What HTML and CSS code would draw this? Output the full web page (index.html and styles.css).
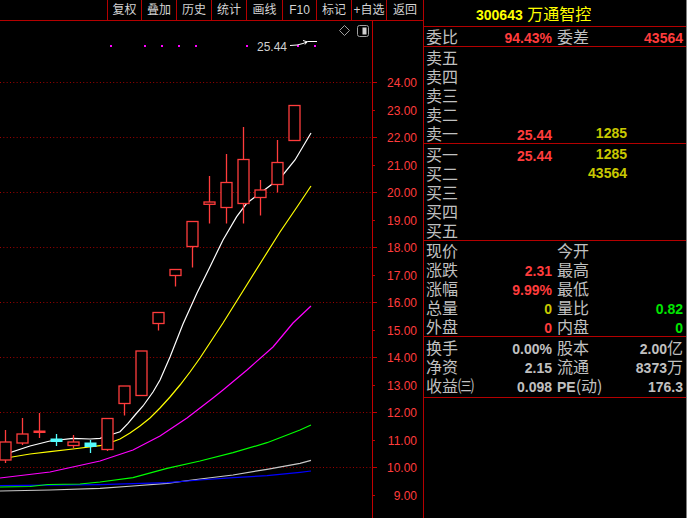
FILE: index.html
```html
<!DOCTYPE html>
<html lang="zh">
<head>
<meta charset="utf-8">
<title>300643 万通智控</title>
<link rel="stylesheet" href="styles.css">
</head>
<body>
<div class="app">
  <div class="left">
    <div class="toolbar">
      <div class="tb-space"></div>
      <div class="tb-btn w34">复权</div>
      <div class="tb-btn w35">叠加</div>
      <div class="tb-btn w35">历史</div>
      <div class="tb-btn w35">统计</div>
      <div class="tb-btn w36">画线</div>
      <div class="tb-btn w34">F10</div>
      <div class="tb-btn w35">标记</div>
      <div class="tb-btn w35">+自选</div>
      <div class="tb-btn w37">返回</div>
    </div>
    <div class="chart">
      <svg class="chart-svg" width="423" height="497" viewBox="0 21 423 497" xmlns="http://www.w3.org/2000/svg">
        <!-- grid -->
        <g class="grid">
          <line x1="0" y1="82.5" x2="372" y2="82.5"/>
          <line x1="0" y1="137.5" x2="372" y2="137.5"/>
          <line x1="0" y1="192.5" x2="372" y2="192.5"/>
          <line x1="0" y1="247.5" x2="372" y2="247.5"/>
          <line x1="0" y1="302.5" x2="372" y2="302.5"/>
          <line x1="0" y1="357.5" x2="372" y2="357.5"/>
          <line x1="0" y1="412.5" x2="372" y2="412.5"/>
          <line x1="0" y1="467.5" x2="372" y2="467.5"/>
        </g>
        <!-- axis -->
        <g class="axis">
          <line x1="372.5" y1="21" x2="372.5" y2="518"/>
          <line x1="372" y1="82.5" x2="377" y2="82.5"/>
          <line x1="372" y1="110.5" x2="375" y2="110.5"/>
          <line x1="372" y1="137.5" x2="377" y2="137.5"/>
          <line x1="372" y1="165.5" x2="375" y2="165.5"/>
          <line x1="372" y1="192.5" x2="377" y2="192.5"/>
          <line x1="372" y1="220.5" x2="375" y2="220.5"/>
          <line x1="372" y1="247.5" x2="377" y2="247.5"/>
          <line x1="372" y1="275.5" x2="375" y2="275.5"/>
          <line x1="372" y1="302.5" x2="377" y2="302.5"/>
          <line x1="372" y1="330.5" x2="375" y2="330.5"/>
          <line x1="372" y1="357.5" x2="377" y2="357.5"/>
          <line x1="372" y1="385.5" x2="375" y2="385.5"/>
          <line x1="372" y1="412.5" x2="377" y2="412.5"/>
          <line x1="372" y1="440.5" x2="375" y2="440.5"/>
          <line x1="372" y1="467.5" x2="377" y2="467.5"/>
          <line x1="372" y1="495.5" x2="375" y2="495.5"/>
        </g>
        <g class="ax">
          <text x="417" y="87">24.00</text>
          <text x="417" y="115">23.00</text>
          <text x="417" y="142">22.00</text>
          <text x="417" y="170">21.00</text>
          <text x="417" y="197">20.00</text>
          <text x="417" y="225">19.00</text>
          <text x="417" y="252">18.00</text>
          <text x="417" y="280">17.00</text>
          <text x="417" y="307">16.00</text>
          <text x="417" y="335">15.00</text>
          <text x="417" y="362">14.00</text>
          <text x="417" y="390">13.00</text>
          <text x="417" y="417">12.00</text>
          <text x="417" y="445">11.00</text>
          <text x="417" y="472">10.00</text>
          <text x="417" y="500">9.00</text>
        </g>
        <!-- top annotations -->
        <g class="mdots">
          <rect x="110" y="45" width="2" height="2"/>
          <rect x="144" y="45" width="2" height="2"/>
          <rect x="161" y="45" width="2" height="2"/>
          <rect x="178" y="45" width="2" height="2"/>
          <rect x="195" y="45" width="2" height="2"/>
          <rect x="246" y="45" width="2" height="2"/>
          <rect x="297" y="45" width="2" height="2"/>
          <rect x="314" y="45" width="2" height="2"/>
        </g>
        <text class="maxlbl" x="257" y="51">25.44</text>
        <polyline class="arrow" points="290,45.5 297,45 303,43.5 308,41.5 317,41.5"/>
        <polyline class="arrow" points="303,40.5 307,41.8 305,44.5"/>
        <polygon class="ico" points="344.5,25.5 349.5,30.5 344.5,35.5 339.5,30.5"/>
        <rect class="ico" x="357.5" y="25.5" width="11" height="11" rx="2"/>
        <rect class="ico-fill" x="362.5" y="27.5" width="4" height="7"/>
        <!-- moving averages -->
        <polyline class="ma ma-gray" points="0,491 50,490 100,488.3 133,486 167,483.3 200,479 233,475 267,469.3 300,463.3 311,460.3"/>
        <polyline class="ma ma-blue" points="0,485.7 100,484.7 167,482.7 200,480 233,477.7 267,475.7 300,472.3 311,471"/>
        <polyline class="ma ma-green" points="0,487 30,486.5 48,484.5 80,484 100,482 133,477.7 167,468.3 200,461 233,452.7 267,442.7 300,430 311,425"/>
        <polyline class="ma ma-mag" points="0,478 50,472 100,461 133,450 160,436 187,418 213,398 223,390 247,370 273,347 293,323 311,306"/>
        <polyline class="ma ma-yel" points="0,459 30,454 50,451.7 73,449 100,445.7 110,442.7 120,439 130,433 140,426 150,418 160,408 170,397 180,385 190,372 200,358 223,323 243,291 263,259 280,232 297,207 311,186"/>
        <polyline class="ma ma-wht" points="0,456 30,446 50,441 73,438.3 90,439 100,438.3 110,435 120,431.7 128,423.3 135,415 143,406 153,392 160,380 170,357 183,324 197,293 210,266.7 223,240 236.7,216.7 246.7,203.3 260,193.3 273.3,183.3 282,176 295,160 311,133"/>
        <!-- candles -->
        <g class="up">
          <line x1="5.5" y1="430" x2="5.5" y2="442"/><rect x="0" y="442" width="11" height="18"/><line x1="5.5" y1="460" x2="5.5" y2="463"/>
          <line x1="22.5" y1="418" x2="22.5" y2="434"/><rect x="17" y="434" width="11" height="9"/><line x1="22.5" y1="443" x2="22.5" y2="445"/>
          <line x1="39.5" y1="413" x2="39.5" y2="438"/>
          <line x1="73.5" y1="435" x2="73.5" y2="442"/><rect x="68" y="442" width="11" height="3.5"/><line x1="73.5" y1="445.5" x2="73.5" y2="448"/>
          <rect x="102" y="418.5" width="11" height="31"/><line x1="107.5" y1="449.5" x2="107.5" y2="451"/>
          <rect x="119" y="386" width="11" height="17.5"/><line x1="124.5" y1="403.5" x2="124.5" y2="415.5"/>
          <rect x="136" y="351" width="11" height="44.5"/>
          <rect x="153" y="312.5" width="11" height="11"/><line x1="158.5" y1="323.5" x2="158.5" y2="330.5"/>
          <rect x="170" y="269.5" width="11" height="6"/><line x1="175.5" y1="275.5" x2="175.5" y2="286.5"/>
          <rect x="187" y="221.5" width="11" height="25"/><line x1="192.5" y1="246.5" x2="192.5" y2="267.5"/>
          <line x1="209.5" y1="176" x2="209.5" y2="202"/><rect x="204" y="202" width="11" height="2.3"/><line x1="209.5" y1="204.3" x2="209.5" y2="223.5"/>
          <line x1="226.5" y1="154" x2="226.5" y2="182.5"/><rect x="221" y="182.5" width="11" height="25"/><line x1="226.5" y1="207.5" x2="226.5" y2="223.5"/>
          <line x1="243.5" y1="127" x2="243.5" y2="159.5"/><rect x="238" y="159.5" width="11" height="44"/><line x1="243.5" y1="203.5" x2="243.5" y2="223.5"/>
          <line x1="260.5" y1="180" x2="260.5" y2="190"/><rect x="255" y="190" width="11" height="7.5"/><line x1="260.5" y1="197.5" x2="260.5" y2="215.5"/>
          <line x1="277.5" y1="140" x2="277.5" y2="162.5"/><rect x="272" y="162.5" width="11" height="22"/><line x1="277.5" y1="184.5" x2="277.5" y2="192.5"/>
          <rect x="289" y="105.5" width="11" height="35"/>
        </g>
        <rect class="up-fill" x="33.5" y="430.5" width="12" height="2.5"/>
        <g class="dn">
          <line x1="56.5" y1="434" x2="56.5" y2="446"/><rect x="50.5" y="438.5" width="12" height="3.5"/>
          <line x1="90.5" y1="440" x2="90.5" y2="453"/><rect x="84.5" y="442.5" width="12" height="4.5"/>
        </g>
      </svg>
    </div>
  </div>
  <div class="panel">
    <div class="title"><span class="code">300643</span> <span class="name">万通智控</span></div>
    <div class="sec sec-wb">
      <div class="row">
        <div class="half"><span class="lb">委比</span><span class="v red">94.43%</span></div>
        <div class="half"><span class="lb">委差</span><span class="v red">43564</span></div>
      </div>
    </div>
    <div class="sec sec-sell">
      <div class="row"><div class="half"><span class="lb">卖五</span><span class="v"></span></div><div class="half"><span class="v vol"></span></div></div>
      <div class="row"><div class="half"><span class="lb">卖四</span><span class="v"></span></div><div class="half"><span class="v vol"></span></div></div>
      <div class="row"><div class="half"><span class="lb">卖三</span><span class="v"></span></div><div class="half"><span class="v vol"></span></div></div>
      <div class="row"><div class="half"><span class="lb">卖二</span><span class="v"></span></div><div class="half"><span class="v vol"></span></div></div>
      <div class="row"><div class="half"><span class="lb">卖一</span><span class="v red">25.44</span></div><div class="half"><span class="v vol yel">1285</span></div></div>
    </div>
    <div class="sec sec-buy">
      <div class="row"><div class="half"><span class="lb">买一</span><span class="v red">25.44</span></div><div class="half"><span class="v vol yel">1285</span></div></div>
      <div class="row"><div class="half"><span class="lb">买二</span><span class="v"></span></div><div class="half"><span class="v vol yel">43564</span></div></div>
      <div class="row"><div class="half"><span class="lb">买三</span><span class="v"></span></div><div class="half"><span class="v vol"></span></div></div>
      <div class="row"><div class="half"><span class="lb">买四</span><span class="v"></span></div><div class="half"><span class="v vol"></span></div></div>
      <div class="row"><div class="half"><span class="lb">买五</span><span class="v"></span></div><div class="half"><span class="v vol"></span></div></div>
    </div>
    <div class="sec sec-quote">
      <div class="row"><div class="half"><span class="lb">现价</span><span class="v"></span></div><div class="half"><span class="lb">今开</span><span class="v"></span></div></div>
      <div class="row"><div class="half"><span class="lb">涨跌</span><span class="v red">2.31</span></div><div class="half"><span class="lb">最高</span><span class="v"></span></div></div>
      <div class="row"><div class="half"><span class="lb">涨幅</span><span class="v red">9.99%</span></div><div class="half"><span class="lb">最低</span><span class="v"></span></div></div>
      <div class="row"><div class="half"><span class="lb">总量</span><span class="v yel">0</span></div><div class="half"><span class="lb">量比</span><span class="v grn">0.82</span></div></div>
      <div class="row"><div class="half"><span class="lb">外盘</span><span class="v red">0</span></div><div class="half"><span class="lb">内盘</span><span class="v grn">0</span></div></div>
    </div>
    <div class="sec sec-stat">
      <div class="row"><div class="half"><span class="lb">换手</span><span class="v">0.00%</span></div><div class="half"><span class="lb">股本</span><span class="v">2.00<span class="cj">亿</span></span></div></div>
      <div class="row"><div class="half"><span class="lb">净资</span><span class="v">2.15</span></div><div class="half"><span class="lb">流通</span><span class="v">8373<span class="cj">万</span></span></div></div>
      <div class="row"><div class="half"><span class="lb">收益㈢</span><span class="v">0.098</span></div><div class="half"><span class="lb"><span class="lat">PE</span>(动)</span><span class="v">176.3</span></div></div>
    </div>
  </div>
</div>
</body>
</html>
```

FILE: styles.css
```css
* { box-sizing: border-box; }
html, body {
  margin: 0;
  padding: 0;
  background: #000;
}
body {
  width: 687px;
  height: 518px;
  overflow: hidden;
  font-family: "Liberation Sans", "Noto Sans CJK SC", sans-serif;
}
.app {
  display: flex;
  height: 518px;
}
.left {
  width: 423px;
  display: flex;
  flex-direction: column;
}
.toolbar {
  height: 21px;
  display: flex;
  border-bottom: 1px solid #b40000;
}
.tb-space { flex: 1; }
.tb-btn {
  flex: none;
  border-left: 1px solid #b40000;
  color: #d4d4d4;
  font-family: "Liberation Sans", "Noto Sans CJK SC", sans-serif;
  font-size: 12px;
  line-height: 20px;
  text-align: center;
}
.w34 { width: 34px; }
.w35 { width: 35px; }
.w36 { width: 36px; }
.w37 { width: 37px; }
.chart {
  flex: 1;
}
.chart-svg { display: block; }
.grid line {
  stroke: #a00000;
  stroke-width: 1;
  stroke-dasharray: 1 2.33;
}
.axis line {
  stroke: #c00000;
  stroke-width: 1;
}
.ax text {
  font-family: "Liberation Sans", sans-serif;
  font-size: 12px;
  fill: #ff3c3c;
  text-anchor: end;
}
.mdots rect { fill: #ff00ff; }
.maxlbl {
  font-family: "Liberation Sans", sans-serif;
  font-size: 12px;
  fill: #d0d0d0;
}
.arrow {
  fill: none;
  stroke: #ffffff;
  stroke-width: 1;
}
.ico {
  fill: none;
  stroke: #a0a0a0;
  stroke-width: 1;
}
.ico-fill { fill: #d0d0d0; }
.ma {
  fill: none;
  stroke-width: 1.2;
}
.ma-wht { stroke: #ffffff; }
.ma-yel { stroke: #ffff00; }
.ma-mag { stroke: #ff00ff; }
.ma-green { stroke: #00ff00; }
.ma-blue { stroke: #0000ff; }
.ma-gray { stroke: #c8c8c8; }
.up line, .up rect {
  stroke: #ff3c3c;
  stroke-width: 1.3;
  fill: #000;
}
.up-fill { fill: #ff3c3c; }
.dn line {
  stroke: #54fcfc;
  stroke-width: 1.3;
}
.dn rect { fill: #54fcfc; }

.panel {
  width: 264px;
  height: 518px;
  border-left: 1px solid #b40000;
  border-right: 1px solid #808080;
  color: #c0c0c0;
}
.title {
  height: 27px;
  border-bottom: 1px solid #b40000;
  padding-left: 52px;
  line-height: 26px;
  color: #ffff00;
  white-space: nowrap;
}
.code {
  font-family: "Liberation Sans", sans-serif;
  font-weight: bold;
  font-size: 14px;
}
.name {
  font-family: "Noto Sans CJK SC", sans-serif;
  font-size: 16px;
}
.sec { border-bottom: 1px solid #b40000; }
.sec-wb { height: 20px; }
.sec-sell { height: 97px; padding-top: 1px; }
.sec-buy { height: 97px; padding-top: 1px; }
.sec-quote { height: 96px; }
.sec-stat { height: 61px; padding-top: 1px; }
.row {
  display: grid;
  grid-template-columns: 126px 126px;
  column-gap: 5px;
  height: 19px;
  line-height: 19px;
  padding-left: 2px;
  white-space: nowrap;
}
.half {
  display: flex;
  justify-content: space-between;
  align-items: baseline;
}
.lb {
  font-family: "Noto Sans CJK SC", sans-serif;
  font-size: 16px;
  color: #c0c0c0;
}
.lat {
  font-family: "Liberation Sans", sans-serif;
  font-weight: bold;
  font-size: 14px;
}
.v {
  font-family: "Liberation Sans", "Noto Sans CJK SC", sans-serif;
  font-weight: bold;
  font-size: 14px;
  color: #c0c0c0;
}
.vol {
  width: 70px;
  text-align: right;
}
.cj {
  font-family: "Noto Sans CJK SC", sans-serif;
  font-weight: normal;
  font-size: 16px;
}
.red { color: #ff3c3c; }
.yel { color: #c8c800; }
.grn { color: #00e600; }
```
